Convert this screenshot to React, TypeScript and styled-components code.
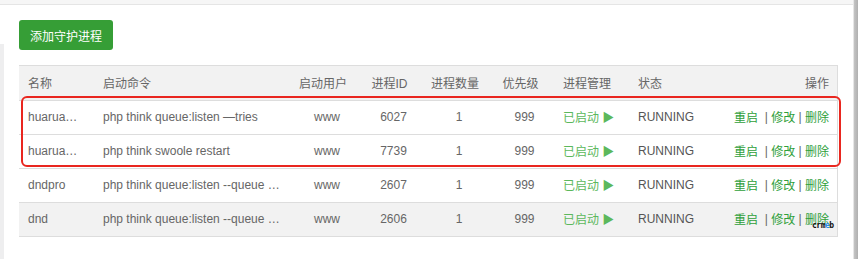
import styled, { createGlobalStyle } from 'styled-components'

const GlobalStyle = createGlobalStyle`
  html, body { margin: 0; padding: 0; background: #fff; }
  body {
    font-family: "Liberation Sans", "Noto Sans CJK SC", sans-serif;
    font-size: 12px;
    color: #666;
  }
`

type Align = 'left' | 'center' | 'right'

interface Column {
  title: string
  width: number
  align: Align
}

const columns: Column[] = [
  { title: '名称', width: 75, align: 'left' },
  { title: '启动命令', width: 196, align: 'left' },
  { title: '启动用户', width: 66, align: 'center' },
  { title: '进程ID', width: 67, align: 'center' },
  { title: '进程数量', width: 64, align: 'center' },
  { title: '优先级', width: 67, align: 'center' },
  { title: '进程管理', width: 75, align: 'left' },
  { title: '状态', width: 83, align: 'left' },
  { title: '操作', width: 126, align: 'right' },
]

const processes = [
  { name: 'huarua…', cmd: 'php think queue:listen —tries', user: 'www', pid: '6027', num: '1', level: '999' },
  { name: 'huarua…', cmd: 'php think swoole restart', user: 'www', pid: '7739', num: '1', level: '999' },
  { name: 'dndpro', cmd: 'php think queue:listen --queue …', user: 'www', pid: '2607', num: '1', level: '999' },
  { name: 'dnd', cmd: 'php think queue:listen --queue …', user: 'www', pid: '2606', num: '1', level: '999' },
]

const gridCols = columns.map((c) => `${c.width}px`).join(' ')

const App = () => {
  return (
    <>
      <GlobalStyle />
      <Page>
        <Main>
          <TopBar />
          <Body>
            <Gutter>
              <GutterFill />
            </Gutter>
            <Content>
              <AddButton>添加守护进程</AddButton>
              <Table>
                <HeadRow>
                  {columns.map((c) => (
                    <Cell key={c.title} $align={c.align}>{c.title}</Cell>
                  ))}
                </HeadRow>
                {processes.map((p, idx) => (
                  <Row key={idx} $striped={idx === 3}>
                    <Cell $align="left">{p.name}</Cell>
                    <Cell $align="left">{p.cmd}</Cell>
                    <Cell $align="center" $shift>{p.user}</Cell>
                    <Cell $align="center" $shift>{p.pid}</Cell>
                    <Cell $align="center" $shift>{p.num}</Cell>
                    <Cell $align="center" $shift>{p.level}</Cell>
                    <Cell $align="left">
                      <Started>已启动 ▶</Started>
                    </Cell>
                    <Cell $align="left">
                      <Status>RUNNING</Status>
                    </Cell>
                    <Cell $align="right">
                      <ActionLink>重启</ActionLink>
                      <Sep>{'\u00a0 | '}</Sep>
                      <ActionLink>修改</ActionLink>
                      <Sep>{' | '}</Sep>
                      <ActionLink>删除</ActionLink>
                    </Cell>
                  </Row>
                ))}
                <Highlight />
                <Watermark>
                  crm<b>e</b>b
                </Watermark>
              </Table>
            </Content>
          </Body>
        </Main>
        <ScrollTrack />
      </Page>
    </>
  )
}

export default App

const Page = styled.div`
  display: flex;
  width: 858px;
  height: 259px;
  overflow: hidden;
`

const Main = styled.div`
  flex: 1;
  display: flex;
  flex-direction: column;
`

const TopBar = styled.div`
  height: 4px;
  background: #f6f6f6;
  border-bottom: 1px solid #e5e5e5;
`

const Body = styled.div`
  flex: 1;
  display: flex;
`

const Gutter = styled.div`
  width: 4px;
  display: flex;
  flex-direction: column;
  padding-top: 39px;
`

const GutterFill = styled.div`
  flex: 1;
  background: #eeeeef;
`

const Content = styled.div`
  flex: 1;
  padding: 15px 15px 0 15px;
  background: #fff;
`

const AddButton = styled.button`
  display: block;
  height: 30px;
  padding: 0 11px;
  border: none;
  border-radius: 3px;
  background: #369e36;
  color: #fff;
  font-family: "Liberation Sans", "Noto Sans CJK SC", sans-serif;
  font-size: 12px;
  cursor: pointer;
`

const Table = styled.div`
  position: relative;
  margin-top: 15px;
  width: 819px;
  box-sizing: border-box;
  border: 1px solid #ddd;
`

const HeadRow = styled.div`
  display: grid;
  grid-template-columns: ${gridCols};
  margin-left: -1px;
  height: 34px;
  background: #f2f2f2;
`

const Row = styled.div<{ $striped?: boolean }>`
  display: grid;
  grid-template-columns: ${gridCols};
  margin-left: -1px;
  height: 34px;
  box-sizing: border-box;
  border-top: 1px solid #ddd;
  background: ${({ $striped }) => ($striped ? '#f2f2f2' : '#fff')};
`

const Cell = styled.div<{ $align: Align; $shift?: boolean }>`
  display: flex;
  align-items: center;
  justify-content: ${({ $align }) =>
    $align === 'left' ? 'flex-start' : $align === 'right' ? 'flex-end' : 'center'};
  padding: 0 9px 2px ${({ $shift }) => ($shift ? '17px' : '9px')};
  white-space: nowrap;
  overflow: hidden;
  color: #666;
`

const Started = styled.span`
  color: #5cb85c;
`

const Status = styled.span`
  color: #555;
`

const ActionLink = styled.a`
  color: #2fa03a;
  cursor: pointer;
`

const Sep = styled.span`
  color: #666;
  white-space: pre;
`

const Highlight = styled.div`
  position: absolute;
  left: 1px;
  top: 30px;
  width: 820px;
  height: 71px;
  box-sizing: border-box;
  border: 2px solid #e9261f;
  border-radius: 6px;
  pointer-events: none;
`

const Watermark = styled.span`
  position: absolute;
  left: 792px;
  top: 156px;
  font-family: "DejaVu Sans Mono", monospace;
  font-size: 8px;
  line-height: 8px;
  font-weight: bold;
  letter-spacing: -0.5px;
  color: #111;
  b {
    color: #2a8de8;
  }
`

const ScrollTrack = styled.div`
  width: 4px;
  border-left: 1px solid #e6e6e6;
  background: linear-gradient(to right, #c4c4c4, #b0b0b0);
`
